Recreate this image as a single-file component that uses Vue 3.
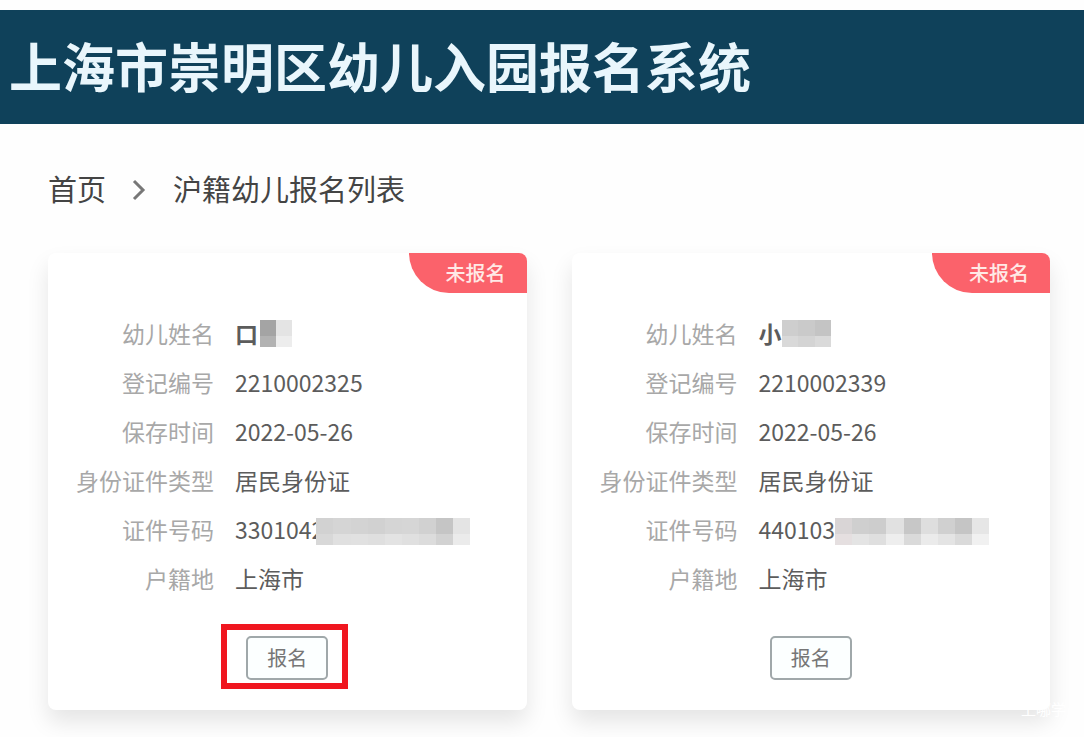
<script setup>
const cards = [
  {
    status: '未报名',
    highlighted: true,
    fields: [
      { label: '幼儿姓名', value: '口', strong: true, mask: ['#a4a4a4', '#e4e4e4', '#b2b2b2', '#ededed'], size: 'tiny' },
      { label: '登记编号', value: '2210002325' },
      { label: '保存时间', value: '2022-05-26' },
      { label: '身份证件类型', value: '居民身份证' },
      {
        label: '证件号码',
        value: '3301042',
        size: 'long',
        mask: [
          '#d2d2d2', '#d5d5d5', '#d3d3d3', '#d1d1d1', '#d5d5d5', '#d6d6d6', '#d1d1d1', '#c5c5c5', '#e4e4e4',
          '#d8d8d8', '#e0e0e0', '#e1e1e1', '#dfdfdf', '#e3e3e3', '#e0e0e0', '#dcdcdc', '#d2d2d2', '#ebebeb',
        ],
      },
      { label: '户籍地', value: '上海市' },
    ],
  },
  {
    status: '未报名',
    highlighted: false,
    fields: [
      { label: '幼儿姓名', value: '小', strong: true, mask: ['#cecece', '#cacaca', '#c4c4c4', '#d9d9d9', '#d4d4d4', '#dadada'], size: 'short' },
      { label: '登记编号', value: '2210002339' },
      { label: '保存时间', value: '2022-05-26' },
      { label: '身份证件类型', value: '居民身份证' },
      {
        label: '证件号码',
        value: '440103',
        size: 'medium',
        mask: [
          '#d9d5d6', '#cfcfcf', '#cdcdcd', '#e1e1e1', '#c7c7c7', '#dedede', '#d0d0d0', '#c5c5c5', '#e6e6e6',
          '#e5dfe0', '#e4e4e4', '#dfdfdf', '#eeeeee', '#dadada', '#ebebeb', '#e4e4e4', '#dadada', '#f1f1f1',
        ],
      },
      { label: '户籍地', value: '上海市' },
    ],
  },
]
</script>

<template>
  <div class="page">
    <header class="banner">
      <h1>上海市崇明区幼儿入园报名系统</h1>
    </header>

    <nav class="crumbs" aria-label="面包屑">
      <a href="#">首页</a>
      <svg class="chevron" viewBox="0 0 14 22" aria-hidden="true">
        <path d="M2 2 L11 11 L2 20" />
      </svg>
      <span>沪籍幼儿报名列表</span>
    </nav>

    <main class="cards">
      <article v-for="(card, i) in cards" :key="i" class="card">
        <span class="badge">{{ card.status }}</span>
        <dl class="fields">
          <div v-for="field in card.fields" :key="field.label" class="row">
            <dt>{{ field.label }}</dt>
            <dd :class="{ strong: field.strong }">
              {{ field.value }}<span v-if="field.mask" class="mask" :class="field.size">
                <i v-for="(color, n) in field.mask" :key="n" :style="{ background: color }"></i>
              </span>
            </dd>
          </div>
        </dl>
        <div class="action" :class="{ highlighted: card.highlighted }">
          <button type="button">报名</button>
        </div>
      </article>
    </main>
    <span class="watermark">上哪学</span>
  </div>
</template>

<style>
body {
  background: #fefefe;
}
</style>

<style scoped>
.page {
  position: relative;
  padding: 10px 0 27px;
  font-family: "Noto Sans CJK SC", "Noto Sans", sans-serif;
  color: #5c5c5c;
}

.banner {
  padding: 23px 9px 27px;
  background: #0f415a;
}

h1 {
  margin: 0;
  font-size: 53px;
  font-weight: 700;
  line-height: 64px;
  white-space: nowrap;
  color: #e9f6fc;
}

.crumbs {
  display: flex;
  align-items: center;
  padding: 43px 48px 0;
  font-size: 29px;
  line-height: 42px;
  color: #444;
}

.crumbs a {
  color: inherit;
  text-decoration: none;
}

.chevron {
  width: 14px;
  height: 22px;
  margin: 4px 27px 0 26px;
  fill: none;
  stroke: #777;
  stroke-width: 3;
}

.cards {
  display: grid;
  grid-template-columns: 1fr 1fr;
  gap: 45px;
  padding: 44px 34px 0 48px;
}

.card {
  position: relative;
  padding: 56px 0 30px;
  border-radius: 8px;
  background: #fff;
  box-shadow: 0 12px 22px rgba(0, 0, 0, 0.1);
}

.badge {
  position: absolute;
  top: 0;
  right: 0;
  padding: 0 21px 0 37px;
  border-radius: 0 8px 0 40px;
  background: #fb626b;
  color: #ffe9e6;
  font-size: 20px;
  font-weight: 500;
  line-height: 40px;
}

.fields {
  margin: 0;
}

.row {
  display: grid;
  grid-template-columns: 166px 1fr;
  column-gap: 21px;
  font-size: 23px;
  line-height: 49px;
  white-space: nowrap;
}

dt {
  text-align: right;
  color: #a8a8a8;
}

dd {
  display: flex;
  align-items: center;
  margin: 0;
}

.strong {
  font-weight: 700;
}

.mask {
  display: grid;
  height: 28px;
  grid-template-rows: 3fr 2fr;
}

.mask.tiny {
  width: 32px;
  margin-left: 2px;
  grid-template-columns: 1fr 1fr;
}

.mask.short {
  width: 50px;
  grid-template-columns: repeat(3, 1fr);
}

.mask.long {
  width: 154px;
  margin: 4px 0 0 -8px;
  grid-template-columns: repeat(9, 1fr);
}

.mask.medium {
  width: 154px;
  margin-top: 4px;
  grid-template-columns: repeat(9, 1fr);
}

.action {
  position: relative;
  width: 82px;
  margin: 33px auto 0;
}

.highlighted::after {
  content: "";
  position: absolute;
  inset: -12px -20px -9px -25px;
  border: 6px solid #f0161f;
  pointer-events: none;
}

button {
  display: block;
  width: 100%;
  height: 44px;
  padding: 0;
  border: 2px solid #a0a8aa;
  border-radius: 5px;
  background: #fcffff;
  color: #777;
  font-family: inherit;
  font-size: 20px;
  line-height: 38px;
}

.watermark {
  position: absolute;
  right: 18px;
  bottom: 18px;
  color: #fff;
  font-size: 15px;
  line-height: 20px;
}
</style>
